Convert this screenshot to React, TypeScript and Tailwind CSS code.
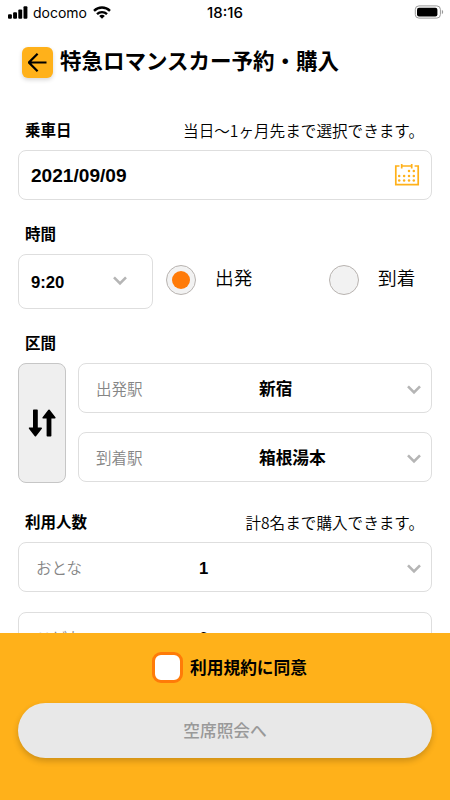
import React from "react";

const jp = "font-['Liberation_Sans','Noto_Sans_CJK_JP',sans-serif]";

function Chevron() {
  return (
    <svg className="mt-[3px] shrink-0" width="14" height="10" viewBox="0 0 14 10" fill="none" stroke="#b5b5b5" strokeWidth="2.6">
      <path d="M1 1.3 7 7.3l6-6" />
    </svg>
  );
}

function CalendarIcon() {
  const dots = [
    [15, 8], [19.8, 8],
    [5.2, 13], [10.1, 13], [15, 13], [19.8, 13],
    [5.2, 17.6], [10.1, 17.6], [15, 17.6], [19.8, 17.6],
  ];
  return (
    <svg width="26" height="24" viewBox="0 0 26 24" fill="none" stroke="#ffb11a" strokeWidth="1.7">
      <path d="M5.5 3H1.8v18.7h22.4V3h-3.6M7.7 3h9.6" />
      <path d="M7.7 1v4.5M17.7 1v4.5" />
      {dots.map(([x, y]) => (
        <circle key={`${x}-${y}`} cx={x} cy={y} r="1.25" fill="#ffb11a" stroke="none" />
      ))}
    </svg>
  );
}

function StatusBar() {
  return (
    <div className="flex h-6 shrink-0 items-center pl-2 pr-[6px] font-['Inter',sans-serif]">
      <div className="flex flex-1 items-center">
        <svg width="20" height="13" viewBox="0 0 20 13" fill="#000">
          <rect x="0" y="8.3" width="3.9" height="4.4" rx="1" />
          <rect x="5.1" y="6.2" width="3.9" height="6.5" rx="1" />
          <rect x="10.3" y="3.4" width="3.9" height="9.3" rx="1" />
          <rect x="15.5" y="0.2" width="3.9" height="12.5" rx="1" />
        </svg>
        <span className="ml-[5px] w-[55px] pt-px text-[14px] leading-6">docomo</span>
        <svg className="ml-[5px]" width="18" height="13" viewBox="0 0 18 13" fill="none" stroke="#000" strokeWidth="2.4">
          <path d="M1 4.8a11.5 11.5 0 0 1 16 0" />
          <path d="M4 8.1a7.2 7.2 0 0 1 10 0" />
          <path d="M9 12.8 6.2 10a3.9 3.9 0 0 1 5.6 0Z" fill="#000" stroke="none" />
        </svg>
      </div>
      <span className="mr-[2px] pt-px text-[15px] font-medium leading-6">18:16</span>
      <div className="flex flex-1 justify-end">
        <svg width="30" height="14" viewBox="0 0 30 14" fill="none">
          <rect x="1.3" y="0.9" width="25.1" height="12.2" rx="3.6" stroke="#999" />
          <rect x="3" y="2.8" width="20.4" height="8.6" rx="2" fill="#000" />
          <path d="M27.9 4.8c1.7.8 1.7 3.6 0 4.4Z" fill="#999" />
        </svg>
      </div>
    </div>
  );
}

function SectionHead({ title, note }: { title: string; note?: string }) {
  return (
    <div className="flex h-6 items-center justify-between pl-[7px] pr-[8px] pt-[2px]">
      <h2 className="text-[15.5px] font-bold leading-6">{title}</h2>
      {note && (
        <p className="whitespace-nowrap pb-[3px] font-['Noto_Sans_CJK_JP',sans-serif] text-[15.6px] font-[350] leading-6">{note}</p>
      )}
    </div>
  );
}

function SelectRow({ label, value }: { label: string; value: string }) {
  return (
    <div className="flex h-[50px] shrink-0 items-center rounded-[8px] border border-[#dedede] bg-white pl-[17px] pr-[10px]">
      <span className="w-[163px] pt-[3px] text-[15.5px] font-[350] text-[#858585]">{label}</span>
      <span className="flex-1 pt-[3px] text-[16.7px] font-bold">{value}</span>
      <Chevron />
    </div>
  );
}

function Radio({ label, checked }: { label: string; checked?: boolean }) {
  return (
    <div className="flex w-[163px] items-center">
      <span className="flex size-[30px] items-center justify-center rounded-full border border-[#b8b3b0] bg-[#f2f2f2]">
        {checked && <span className="size-[18px] rounded-full bg-[#ff7b08]" />}
      </span>
      <span className="ml-[19px] text-[18.7px] font-[350]">{label}</span>
    </div>
  );
}

export default function App() {
  return (
    <div className={`flex h-[800px] w-[450px] flex-col overflow-hidden bg-white text-black ${jp}`}>
      <StatusBar />
      <header className="flex h-[77px] shrink-0 items-center pb-[1px] pl-[22px]">
        <button className="flex size-[31px] items-center justify-center rounded-[6px] bg-[#ffb11a] shadow-[0_2px_4px_rgba(0,0,0,0.16)]">
          <svg width="19" height="19" viewBox="0 0 19 19" fill="none" stroke="#000" strokeWidth="2.2">
            <path d="M9.6.8.9 9.5l8.7 8.7M1.2 9.5h17.3" />
          </svg>
        </button>
        <h1 className="ml-[7px] pb-[1px] text-[21.5px] font-bold leading-8">特急ロマンスカー予約・購入</h1>
      </header>

      <main className="flex min-h-0 flex-1 flex-col overflow-hidden px-[18px] pt-[17px]">
        <SectionHead title="乗車日" note="当日〜1ヶ月先まで選択できます。" />
        <div className="mt-[8px] flex h-[50px] shrink-0 items-center justify-between rounded-[8px] border border-[#dedede] pl-3 pr-[11px]">
          <span className="pt-[2px] text-[19.1px] font-bold">2021/09/09</span>
          <CalendarIcon />
        </div>

        <div className="mt-[22px] shrink-0">
          <SectionHead title="時間" />
        </div>
        <div className="mt-[8px] flex h-[55px] shrink-0 items-center">
          <div className="flex h-full w-[135px] shrink-0 items-center justify-between rounded-[8px] border border-[#dedede] pl-3 pr-[25px]">
            <span className="pt-[2px] text-[16.7px] font-bold">9:20</span>
            <div className="pb-[5px]">
              <Chevron />
            </div>
          </div>
          <div className="ml-[13px] flex shrink-0 pb-[4px]">
            <Radio label="出発" checked />
            <Radio label="到着" />
          </div>
        </div>

        <div className="mt-[22px] shrink-0">
          <SectionHead title="区間" />
        </div>
        <div className="mt-[8px] flex h-[120px] shrink-0 gap-3">
          <button className="flex w-12 items-center justify-center rounded-[8px] border border-[#c6c6c6] bg-[#efefef]">
            <svg width="28" height="28" viewBox="0 0 28 28" fill="#000" stroke="#000" strokeWidth="1.6" strokeLinejoin="round">
              <path d="M5.8 1.2h3.2v18h4.2L7.4 26.7 1.6 19.2h4.2Z" />
              <path d="M19.4 26.8h3.2v-18h4.2L21 1.3l-5.8 7.5h4.2Z" />
            </svg>
          </button>
          <div className="flex flex-1 flex-col justify-between pb-px">
            <SelectRow label="出発駅" value="新宿" />
            <SelectRow label="到着駅" value="箱根湯本" />
          </div>
        </div>

        <div className="mt-[27px] shrink-0">
          <SectionHead title="利用人数" note="計8名まで購入できます。" />
        </div>
        <div className="mt-[8px] flex shrink-0 flex-col gap-5">
          <SelectRow label="おとな" value="1" />
          <SelectRow label="こども" value="0" />
        </div>
      </main>

      <footer className="flex h-[167px] shrink-0 flex-col items-center bg-[#ffb11a] px-[18px] pt-[18px]">
        <label className="flex h-8 items-center gap-[7px] pl-[9px]">
          <span className="size-[31px] rounded-[9px] border-[3px] border-[#ff7b08] bg-white" />
          <span className="pt-[3px] text-[16.7px] font-bold">利用規約に同意</span>
        </label>
        <button className="mt-5 h-[55px] w-full rounded-full bg-[#e8e8e8] pt-[3px] text-[16.7px] font-medium text-[#999] shadow-[0_3px_6px_rgba(0,0,0,0.2)]">
          空席照会へ
        </button>
      </footer>
    </div>
  );
}
